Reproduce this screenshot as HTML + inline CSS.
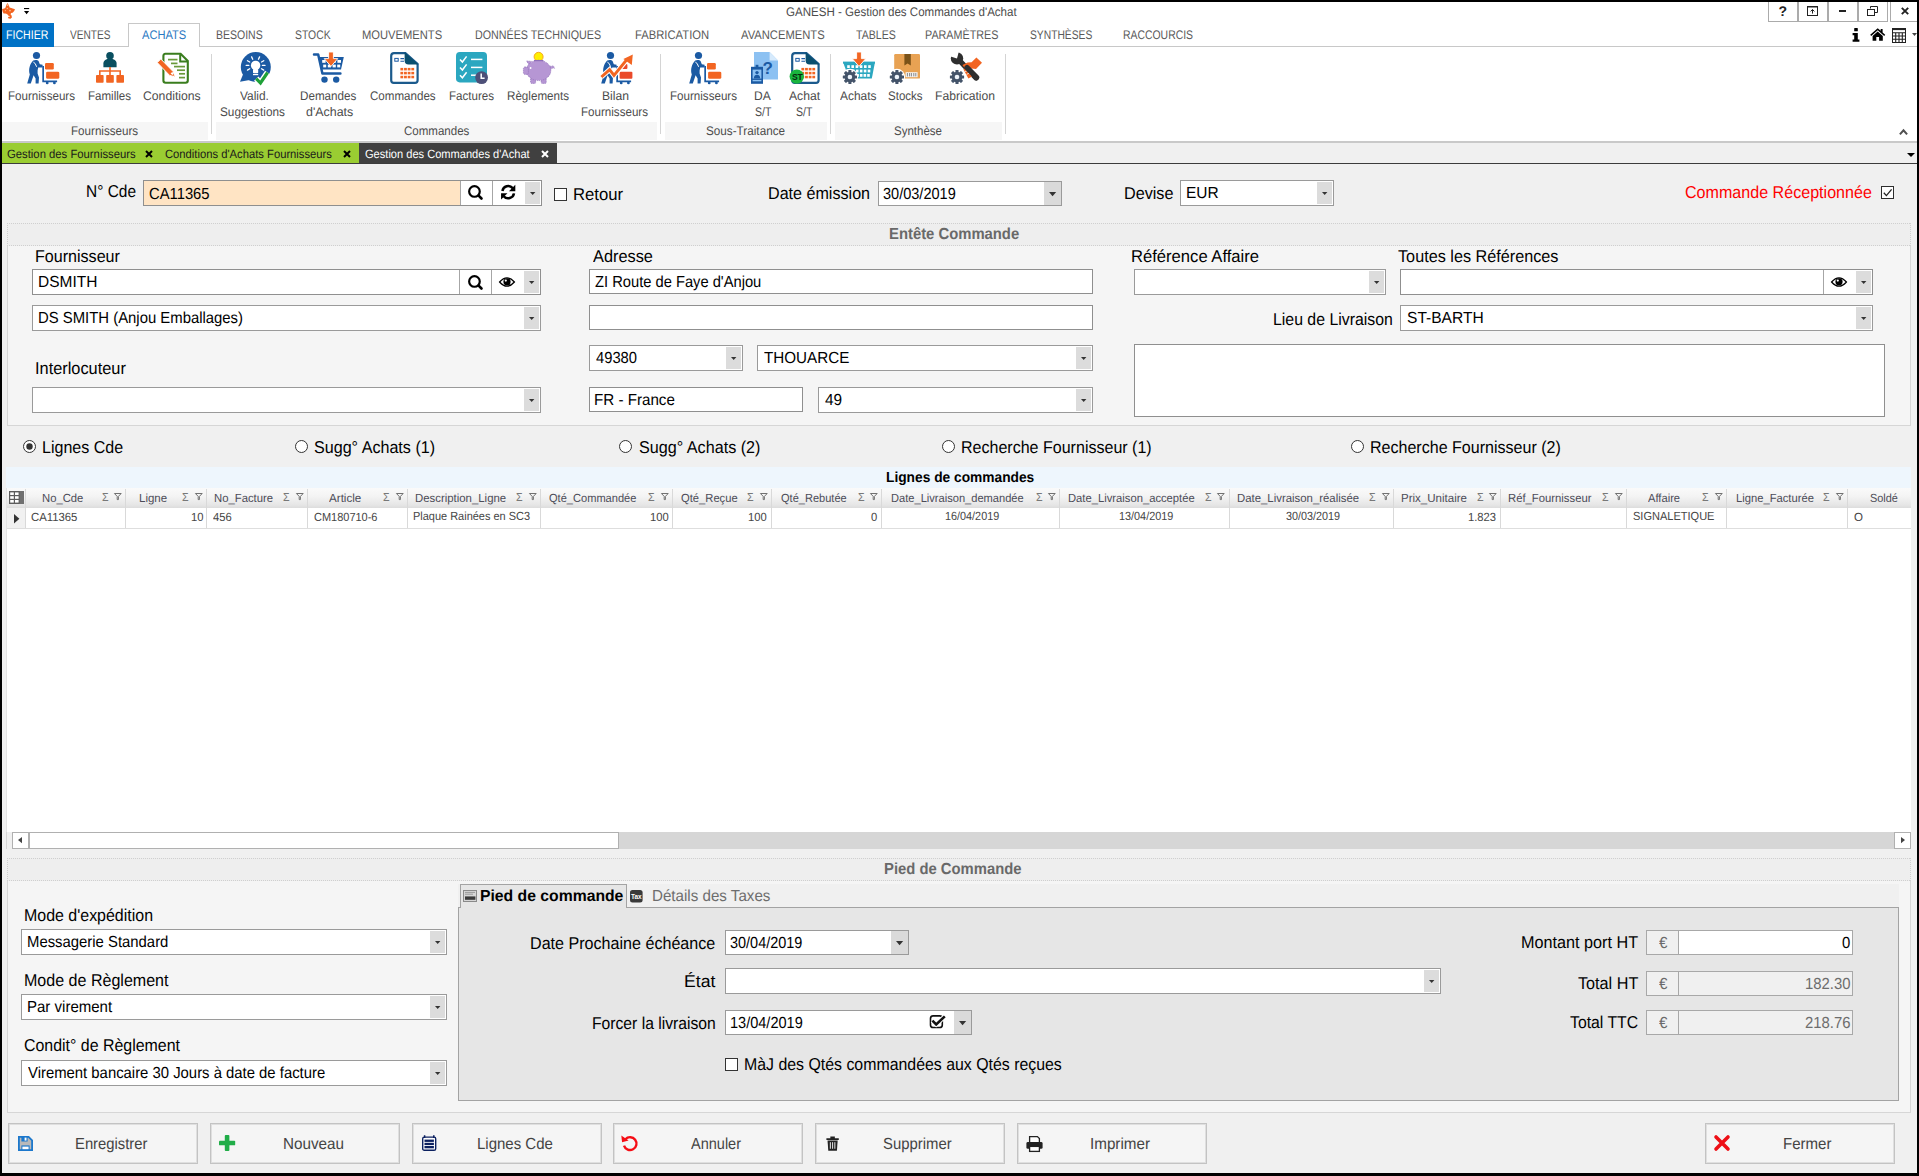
<!DOCTYPE html>
<html lang="fr"><head><meta charset="utf-8"><title>GANESH - Gestion des Commandes d'Achat</title>
<style>
html,body{margin:0;padding:0}
body{width:1919px;height:1176px;background:#000;overflow:hidden;position:relative;font-family:"Liberation Sans",sans-serif}
body>div,body>span,body>svg{position:absolute;box-sizing:border-box}
.t{white-space:nowrap;display:block;transform-origin:0 50%;text-rendering:geometricPrecision}
svg{overflow:visible}
</style></head>
<body>
<div style="left:2px;top:2px;width:1915px;height:1171px;background:#f0f0f0;"></div>
<div style="left:2px;top:2px;width:1915px;height:139px;background:#ffffff;"></div>
<div style="left:2px;top:141px;width:1915px;height:2px;background:#c9c9c9;"></div>
<span class="t" style="left:786.42px;top:4px;font-size:12.5px;line-height:16px;color:#4c4c4c;transform:scaleX(0.9237);">GANESH - Gestion des Commandes d'Achat</span>
<svg style="left:2px;top:3px" width="14" height="17" viewBox="0 0 14 17"><path d="M5.5 0.1 L6.9 2.6 L7.6 4.4 L9.2 4.9 L13 6.2 L12.2 8 L10.6 9.8 L9 10 L8.6 11.4 L9.6 12.6 L9.9 14.6 L8.6 15.8 L6.6 15.6 L5.9 14.4 L7.2 13.6 L6.4 12.4 L5 11 L3.4 10.4 L1.6 10.6 L0.6 8.6 L0.1 6 L2.4 5.4 L3.6 4.4 L4.1 2.6 Z" fill="#f2631f"/><g fill="#fbb98a"><circle cx="5.5" cy="2.2" r="0.9"/><circle cx="5.3" cy="5.4" r="0.7"/><circle cx="8" cy="7.6" r="0.9"/><circle cx="3.4" cy="7.6" r="0.6"/><circle cx="7.4" cy="13.4" r="0.6"/></g></svg>
<svg style="left:24px;top:8px" width="5.2" height="6.4" viewBox="0 0 5.2 6.4"><rect x="0" y="0" width="5.2" height="1.1" fill="#000"/><path d="M0 3 H5.2 L2.6 6.3 Z" fill="#000"/></svg>
<div style="left:1768px;top:2px;width:30px;height:20px;border:1px solid #ababab;border-top:none;"></div>
<div style="left:1798px;top:2px;width:30px;height:20px;border:1px solid #ababab;border-top:none;"></div>
<div style="left:1828px;top:2px;width:30px;height:20px;border:1px solid #ababab;border-top:none;"></div>
<div style="left:1858px;top:2px;width:30px;height:20px;border:1px solid #ababab;border-top:none;"></div>
<div style="left:1890px;top:2px;width:27px;height:20px;border:1px solid #ababab;border-top:none;border-right:none;"></div>
<span class="t" style="left:1778.39px;top:2px;font-size:14px;line-height:18px;color:#222;font-weight:bold;">?</span>
<svg style="left:1807px;top:6px" width="11" height="10" viewBox="0 0 11 10"><rect x="0.5" y="0.5" width="10" height="9" fill="none" stroke="#222" stroke-width="1"/><rect x="0.5" y="0.2" width="10" height="1.3" fill="#222"/><path d="M5.5 7.6 V3.6 M3.6 5.4 L5.5 3.5 L7.4 5.4" fill="none" stroke="#222" stroke-width="1"/></svg>
<div style="left:1839px;top:10px;width:7px;height:2px;background:#222;"></div>
<svg style="left:1867px;top:6px" width="11" height="10" viewBox="0 0 11 10"><path d="M3.5 2.5 V0.5 H10.5 V6.5 H8" fill="none" stroke="#222" stroke-width="1"/><rect x="0.5" y="3.5" width="7" height="6" fill="none" stroke="#222" stroke-width="1"/></svg>
<svg style="left:1900.5px;top:7px" width="8" height="8" viewBox="0 0 8 8"><path d="M0.8 0.8 L7.2 7.2 M7.2 0.8 L0.8 7.2" stroke="#222" stroke-width="1.9" fill="none"/></svg>
<svg style="left:1851.5px;top:28px" width="8" height="14" viewBox="0 0 8 14"><rect x="2.2" y="0" width="3.6" height="3.3" rx="0.6" fill="#000"/><path d="M0.6 5 H5.8 V11.4 H7.4 V13.8 H0.6 V11.4 H2.2 V7.3 H0.6 Z" fill="#000"/></svg>
<svg style="left:1869.5px;top:28px" width="16" height="13" viewBox="0 0 16 13"><path d="M7.7 0.2 L0.2 6.8 L1.2 7.9 L7.7 2.2 L14.2 7.9 L15.2 6.8 L12.6 4.5 V0.9 H10.7 V2.8 Z" fill="#000"/><path d="M7.7 3.4 L2.6 7.9 V12.8 H6.3 V9 H9.1 V12.8 H12.8 V7.9 Z" fill="#000"/></svg>
<svg style="left:1892px;top:28px" width="14" height="15" viewBox="0 0 14 15"><rect x="0.5" y="0.5" width="13" height="14" fill="#fff" stroke="#222" stroke-width="1"/><rect x="0.5" y="0.5" width="13" height="1.6" fill="#222"/><path d="M0.5 4.8 H13.5 M0.5 8 H13.5 M0.5 11.2 H13.5 M3.7 4.8 V14.5 M7 4.8 V14.5 M10.3 4.8 V14.5" stroke="#222" stroke-width="1.1" fill="none"/></svg>
<svg style="left:1912px;top:33px" width="5" height="3" viewBox="0 0 5 3"><path d="M0 0 H5 L2.5 3 Z" fill="#444"/></svg>
<div style="left:2px;top:46px;width:1915px;height:1px;background:#c8c8c8;"></div>
<div style="left:2px;top:23px;width:52px;height:24px;background:#0072c6;"></div>
<span class="t" style="left:6.45px;top:27px;font-size:12.5px;line-height:16px;color:#fff;transform:scaleX(0.8465);">FICHIER</span>
<div style="left:128px;top:23px;width:72px;height:24px;background:#fff;border:1px solid #c8c8c8;border-bottom:none;"></div>
<span class="t" style="left:69.95px;top:27px;font-size:12.5px;line-height:16px;color:#5a5a5a;transform:scaleX(0.8101);">VENTES</span>
<span class="t" style="left:142.24px;top:27px;font-size:12.5px;line-height:16px;color:#2a78c2;transform:scaleX(0.8895);">ACHATS</span>
<span class="t" style="left:216.46px;top:27px;font-size:12.5px;line-height:16px;color:#5a5a5a;transform:scaleX(0.8407);">BESOINS</span>
<span class="t" style="left:294.53px;top:27px;font-size:12.5px;line-height:16px;color:#5a5a5a;transform:scaleX(0.8307);">STOCK</span>
<span class="t" style="left:362.41px;top:27px;font-size:12.5px;line-height:16px;color:#5a5a5a;transform:scaleX(0.8943);">MOUVEMENTS</span>
<span class="t" style="left:475.14px;top:27px;font-size:12.5px;line-height:16px;color:#5a5a5a;transform:scaleX(0.8574);">DONNÉES TECHNIQUES</span>
<span class="t" style="left:635.1px;top:27px;font-size:12.5px;line-height:16px;color:#5a5a5a;transform:scaleX(0.8995);">FABRICATION</span>
<span class="t" style="left:740.94px;top:27px;font-size:12.5px;line-height:16px;color:#5a5a5a;transform:scaleX(0.8960);">AVANCEMENTS</span>
<span class="t" style="left:855.74px;top:27px;font-size:12.5px;line-height:16px;color:#5a5a5a;transform:scaleX(0.8455);">TABLES</span>
<span class="t" style="left:925.14px;top:27px;font-size:12.5px;line-height:16px;color:#5a5a5a;transform:scaleX(0.8610);">PARAMÈTRES</span>
<span class="t" style="left:1030.24px;top:27px;font-size:12.5px;line-height:16px;color:#5a5a5a;transform:scaleX(0.8221);">SYNTHÈSES</span>
<span class="t" style="left:1123.17px;top:27px;font-size:12.5px;line-height:16px;color:#5a5a5a;transform:scaleX(0.8332);">RACCOURCIS</span>
<div style="left:2px;top:122px;width:206px;height:18px;background:#f6f6f6;"></div>
<span class="t" style="left:71.37px;top:123px;font-size:12.5px;line-height:16px;color:#4c4c4c;transform:scaleX(0.9292);">Fournisseurs</span>
<div style="left:216px;top:122px;width:441px;height:18px;background:#f6f6f6;"></div>
<span class="t" style="left:403.72px;top:123px;font-size:12.5px;line-height:16px;color:#4c4c4c;transform:scaleX(0.9223);">Commandes</span>
<div style="left:665px;top:122px;width:162px;height:18px;background:#f6f6f6;"></div>
<span class="t" style="left:706.47px;top:123px;font-size:12.5px;line-height:16px;color:#4c4c4c;transform:scaleX(0.9377);">Sous-Traitance</span>
<div style="left:835px;top:122px;width:167px;height:18px;background:#f6f6f6;"></div>
<span class="t" style="left:894.48px;top:123px;font-size:12.5px;line-height:16px;color:#4c4c4c;transform:scaleX(0.9215);">Synthèse</span>
<div style="left:211px;top:54px;width:1px;height:80px;background:#d4d4d4;"></div>
<div style="left:660px;top:54px;width:1px;height:80px;background:#d4d4d4;"></div>
<div style="left:830px;top:54px;width:1px;height:80px;background:#d4d4d4;"></div>
<div style="left:1005px;top:54px;width:1px;height:80px;background:#d4d4d4;"></div>
<svg style="left:1899px;top:128px" width="9" height="8" viewBox="0 0 9 8"><path d="M0.9 6.4 L4.5 2.3 L8.1 6.4" stroke="#505050" stroke-width="2" fill="none"/></svg>
<span class="t" style="left:8.37px;top:88px;font-size:12.5px;line-height:16px;color:#4c4c4c;transform:scaleX(0.9278);">Fournisseurs</span>
<span class="t" style="left:88.38px;top:88px;font-size:12.5px;line-height:16px;color:#4c4c4c;transform:scaleX(0.9239);">Familles</span>
<span class="t" style="left:143.39px;top:88px;font-size:12.5px;line-height:16px;color:#4c4c4c;transform:scaleX(0.9774);">Conditions</span>
<span class="t" style="left:239.94px;top:88px;font-size:12.5px;line-height:16px;color:#4c4c4c;transform:scaleX(0.9510);">Valid.</span>
<span class="t" style="left:220.47px;top:104px;font-size:12.5px;line-height:16px;color:#4c4c4c;transform:scaleX(0.9436);">Suggestions</span>
<span class="t" style="left:300.07px;top:88px;font-size:12.5px;line-height:16px;color:#4c4c4c;transform:scaleX(0.9322);">Demandes</span>
<span class="t" style="left:305.5px;top:104px;font-size:12.5px;line-height:16px;color:#4c4c4c;transform:scaleX(0.9928);">d'Achats</span>
<span class="t" style="left:370.42px;top:88px;font-size:12.5px;line-height:16px;color:#4c4c4c;transform:scaleX(0.9266);">Commandes</span>
<span class="t" style="left:449.07px;top:88px;font-size:12.5px;line-height:16px;color:#4c4c4c;transform:scaleX(0.9259);">Factures</span>
<span class="t" style="left:507.07px;top:88px;font-size:12.5px;line-height:16px;color:#4c4c4c;transform:scaleX(0.9302);">Règlements</span>
<span class="t" style="left:601.73px;top:88px;font-size:12.5px;line-height:16px;color:#4c4c4c;transform:scaleX(0.9731);">Bilan</span>
<span class="t" style="left:581.37px;top:104px;font-size:12.5px;line-height:16px;color:#4c4c4c;transform:scaleX(0.9278);">Fournisseurs</span>
<span class="t" style="left:670.07px;top:88px;font-size:12.5px;line-height:16px;color:#4c4c4c;transform:scaleX(0.9278);">Fournisseurs</span>
<span class="t" style="left:754.04px;top:88px;font-size:12.5px;line-height:16px;color:#4c4c4c;transform:scaleX(0.9619);">DA</span>
<span class="t" style="left:754.83px;top:104px;font-size:12.5px;line-height:16px;color:#4c4c4c;transform:scaleX(0.8427);">S/T</span>
<span class="t" style="left:788.94px;top:88px;font-size:12.5px;line-height:16px;color:#4c4c4c;transform:scaleX(0.9743);">Achat</span>
<span class="t" style="left:796.03px;top:104px;font-size:12.5px;line-height:16px;color:#4c4c4c;transform:scaleX(0.8427);">S/T</span>
<span class="t" style="left:839.94px;top:88px;font-size:12.5px;line-height:16px;color:#4c4c4c;transform:scaleX(0.9551);">Achats</span>
<span class="t" style="left:888.48px;top:88px;font-size:12.5px;line-height:16px;color:#4c4c4c;transform:scaleX(0.9232);">Stocks</span>
<span class="t" style="left:935.03px;top:88px;font-size:12.5px;line-height:16px;color:#4c4c4c;transform:scaleX(0.9716);">Fabrication</span>
<svg style="left:27px;top:52px" width="33" height="32" viewBox="0 0 33 32"><g fill="#1b5aa3"><circle cx="9.5" cy="3.5" r="3.6"/><path d="M6.2 8.6 C8 7.6 10.8 7.8 11.8 9.4 L12.8 12.2 L15.6 12.8 V15.6 L11.2 15.4 C10.6 17.5 10.4 19.5 10.6 21.4 L12 25.4 L11.6 31.4 H8.6 V26.4 L6.6 23.2 L3.8 31.4 H0.2 L2.8 22.4 C1.2 18.4 2.6 12 6.2 8.6 Z"/><path d="M15.3 14 H17 V28.4 H30.1 V30.3 H15.3 Z"/><circle cx="20.2" cy="30.9" r="1.4"/><circle cx="27.4" cy="30.9" r="1.4"/></g><path d="M6.4 10.2 Q8.4 10.6 9.6 14.8" stroke="#fff" stroke-width="1" fill="none"/><rect x="18" y="11" width="8.8" height="6.5" rx="1.2" fill="#f26522"/><rect x="19.1" y="19.7" width="13.2" height="7.1" rx="1.4" fill="#f26522"/></svg>
<svg style="left:96px;top:52px" width="28" height="32" viewBox="0 0 28 32"><circle cx="14" cy="3.8" r="3.8" fill="#0a4f60"/><path d="M7.4 15.2 V11.6 C7.4 8.4 10 6.8 14 6.8 C18 6.8 20.6 8.4 20.6 11.6 V15.2 Z" fill="#0a4f60"/><path d="M14 15 V23.4 M3.8 23.4 V19 H24.2 V23.4" stroke="#f26522" stroke-width="1.6" fill="none"/><rect x="0" y="23" width="7.6" height="7.8" rx="0.8" fill="#f26522"/><rect x="10.2" y="23" width="7.6" height="7.8" rx="0.8" fill="#f26522"/><rect x="20.4" y="23" width="7.6" height="7.8" rx="0.8" fill="#f26522"/></svg>
<svg style="left:157px;top:52px" width="32" height="32" viewBox="0 0 32 32"><path d="M8.4 1.8 H23.6 L30.8 9 V28.6 Q30.8 30.8 28.6 30.8 H8.6 Q6.4 30.8 6.4 28.6 V4 Q6.4 1.8 8.4 1.8 Z" fill="#fff" stroke="#3a7d1e" stroke-width="2.1"/><path d="M23.2 2.2 V9.4 H30.4" fill="none" stroke="#3a7d1e" stroke-width="2"/><path d="M11 7.6 H20.5" stroke="#6a9a3a" stroke-width="1.7"/><path d="M14 11.4 H20.5" stroke="#6a9a3a" stroke-width="1.7"/><path d="M17 14.6 H28" stroke="#6a9a3a" stroke-width="1.7"/><path d="M20 18.2 H28" stroke="#6a9a3a" stroke-width="1.7"/><path d="M22 21.8 H28" stroke="#6a9a3a" stroke-width="1.7"/><path d="M22 25.6 H28" stroke="#6a9a3a" stroke-width="1.7"/><path d="M0.2 10.6 L3.8 7 L16.4 19.8 L17.6 24.8 L12.6 23.4 Z" fill="#f26522" stroke="#fff" stroke-width="1"/><path d="M13.6 21.4 L15.4 19.8 L17.6 24.8 Z" fill="#fff"/><path d="M15.6 22.8 L17.6 24.8 L16.6 22 Z" fill="#f26522"/></svg>
<svg style="left:240px;top:52px" width="32" height="32" viewBox="0 0 32 32"><circle cx="15.8" cy="15" r="15" fill="#1b5aa3"/><path d="M0 29.8 L4 20 L11 27.8 Z" fill="#1b5aa3"/><circle cx="15.6" cy="13.4" r="4.7" fill="#fff"/><rect x="13" y="17" width="5.2" height="4.2" rx="0.8" fill="#fff"/><path d="M13 22.6 H18.2" stroke="#fff" stroke-width="1.2"/><path d="M9.71 10 L7.46 8.7" stroke="#fff" stroke-width="1.3" stroke-linecap="round"/><path d="M12.73 7.24 L11.63 4.88" stroke="#fff" stroke-width="1.3" stroke-linecap="round"/><path d="M18.47 7.24 L19.57 4.88" stroke="#fff" stroke-width="1.3" stroke-linecap="round"/><path d="M21.49 10 L23.74 8.7" stroke="#fff" stroke-width="1.3" stroke-linecap="round"/><path d="M8.8 13.4 L6.2 13.4" stroke="#fff" stroke-width="1.3" stroke-linecap="round"/><path d="M22.4 13.4 L25 13.4" stroke="#fff" stroke-width="1.3" stroke-linecap="round"/><path d="M9.71 16.8 L7.46 18.1" stroke="#fff" stroke-width="1.3" stroke-linecap="round"/><path d="M21.49 16.8 L23.74 18.1" stroke="#fff" stroke-width="1.3" stroke-linecap="round"/><path d="M16.2 26.6 L20.5 31 L27.6 20.5" stroke="#fff" stroke-width="6" fill="none"/><path d="M16.2 26.6 L20.5 31 L27.6 20.5" stroke="#1ea038" stroke-width="3.2" fill="none"/></svg>
<svg style="left:313px;top:52px" width="32" height="32" viewBox="0 0 32 32"><path d="M1 2.6 H5.2 L9.4 21.4 H27.4" stroke="#1b5aa3" stroke-width="2.5" fill="none" stroke-linecap="round" stroke-linejoin="round"/><path d="M6 5 H30.8 L28 17.4 H8.8 Z" fill="#1b5aa3"/><rect x="9.2" y="8" width="3.4" height="2.8" fill="#fff"/><rect x="14.2" y="8" width="3.4" height="2.8" fill="#fff"/><rect x="19.4" y="8" width="3.4" height="2.8" fill="#fff"/><rect x="24.4" y="8" width="3.6" height="2.8" fill="#fff"/><rect x="10.2" y="12.6" width="3" height="2.8" fill="#fff"/><rect x="14.8" y="12.6" width="3.2" height="2.8" fill="#fff"/><rect x="19.6" y="12.6" width="3.2" height="2.8" fill="#fff"/><rect x="24.2" y="12.6" width="3" height="2.8" fill="#fff"/><circle cx="11.5" cy="27.6" r="3.2" fill="#1b5aa3"/><circle cx="23.2" cy="27.6" r="3.2" fill="#1b5aa3"/><path d="M15.6 0 H20.4 V6.6 H24.8 L18 14.4 L11.2 6.6 H15.6 Z" fill="#f26522" stroke="#fff" stroke-width="0.9"/></svg>
<svg style="left:389.5px;top:52px" width="29" height="32" viewBox="0 0 29 32"><path d="M4 1.2 H15.4 L27.6 12 V28.2 Q27.6 30.8 25 30.8 H3.8 Q1.2 30.8 1.2 28.2 V4 Q1.2 1.2 4 1.2 Z" fill="#fff" stroke="#1b5a8c" stroke-width="2.2"/><path d="M14.6 0.2 L28.6 12.6 H18.6 Q14.6 12.6 14.6 8.6 Z" fill="#0a4f6e"/><rect x="4.8" y="6.4" width="3.4" height="2.8" fill="none" stroke="#1b5aa3" stroke-width="1"/><path d="M10.4 6.6 H14 M10.4 9.2 H14" stroke="#1b5aa3" stroke-width="1.1"/><rect x="10.4" y="15.9" width="2.8" height="2.5" fill="#f26522"/><rect x="10.4" y="19.85" width="2.8" height="2.5" fill="#f26522"/><rect x="10.4" y="23.8" width="2.8" height="2.5" fill="#f26522"/><rect x="14.05" y="15.9" width="2.8" height="2.5" fill="#f26522"/><rect x="14.05" y="19.85" width="2.8" height="2.5" fill="#f26522"/><rect x="14.05" y="23.8" width="2.8" height="2.5" fill="#f26522"/><rect x="17.7" y="15.9" width="2.8" height="2.5" fill="#f26522"/><rect x="17.7" y="19.85" width="2.8" height="2.5" fill="#f26522"/><rect x="17.7" y="23.8" width="2.8" height="2.5" fill="#f26522"/><rect x="21.35" y="15.9" width="2.8" height="2.5" fill="#f26522"/><rect x="21.35" y="19.85" width="2.8" height="2.5" fill="#f26522"/><rect x="21.35" y="23.8" width="2.8" height="2.5" fill="#f26522"/></svg>
<svg style="left:456px;top:52px" width="32" height="32" viewBox="0 0 32 32"><rect x="0" y="0" width="31" height="30.4" rx="3.8" fill="#2ba7c0"/><path d="M4 7.4 L6.4 10 L10.6 4.4" stroke="#fff" stroke-width="1.5" fill="none"/><path d="M15 7.4 H26.4" stroke="#fff" stroke-width="1.5"/><path d="M4 15.4 L6.4 18 L10.6 12.4" stroke="#fff" stroke-width="1.5" fill="none"/><path d="M15 15.4 H26.4" stroke="#fff" stroke-width="1.5"/><path d="M4 23.2 L6.4 25.8 L10.6 20.2" stroke="#fff" stroke-width="1.5" fill="none"/><path d="M15 23.2 H26.4" stroke="#fff" stroke-width="1.5"/><circle cx="25.6" cy="25.6" r="6.4" fill="#4d5078"/><path d="M25.2 21.6 V26.2 H28.6" stroke="#fff" stroke-width="1.5" fill="none"/></svg>
<svg style="left:522.5px;top:52px" width="32" height="32" viewBox="0 0 32 32"><circle cx="15.6" cy="4.8" r="4.5" fill="#ffef00" stroke="#f5a623" stroke-width="1"/><g fill="#b696d4" stroke="#8f6fb8" stroke-width="0.7" stroke-dasharray="1.2 0.8"><rect x="7.6" y="24" width="5" height="7.4" rx="1"/><rect x="18.2" y="24" width="5" height="7.4" rx="1"/><path d="M26.6 14.6 Q31 12.6 31.6 16.2 Q29.4 15.6 27.6 17.4 Z"/><path d="M3.6 9 L8.4 9.4 L6.4 13.4 Z"/><ellipse cx="15.6" cy="18.4" rx="12.2" ry="10.2"/><rect x="0.4" y="15" width="5" height="7.4" rx="1.6"/></g><path d="M11 8.6 H20.4" stroke="#8f6fb8" stroke-width="1.2"/><circle cx="7.6" cy="16" r="0.9" fill="#fff"/></svg>
<svg style="left:601px;top:52px" width="32" height="32" viewBox="0 0 32 32"><g fill="#1b5aa3"><circle cx="9.5" cy="3.5" r="3.6"/><path d="M6.2 8.6 C8 7.6 10.8 7.8 11.8 9.4 L12.8 12.2 L15.6 12.8 V15.6 L11.2 15.4 C10.6 17.5 10.4 19.5 10.6 21.4 L12 25.4 L11.6 31.4 H8.6 V26.4 L6.6 23.2 L3.8 31.4 H0.2 L2.8 22.4 C1.2 18.4 2.6 12 6.2 8.6 Z"/><path d="M15.3 14 H17 V28.4 H30.1 V30.3 H15.3 Z"/><circle cx="20.2" cy="30.9" r="1.4"/><circle cx="27.4" cy="30.9" r="1.4"/></g><path d="M6.4 10.2 Q8.4 10.6 9.6 14.8" stroke="#fff" stroke-width="1" fill="none"/><rect x="18.6" y="19.8" width="12.8" height="7" rx="1" fill="#ea4a2a"/><rect x="20.4" y="12" width="6" height="5" rx="1" fill="#ea4a2a"/><path d="M0.4 25 L8.6 17.6 L13 23.4 L26 7.4" stroke="#fff" stroke-width="5" fill="none"/><path d="M0.4 25 L8.6 17.6 L13 23.4 L26 7.4" stroke="#f26522" stroke-width="3" fill="none"/><path d="M22.4 7 L31.8 2.6 L30.8 13 Z" fill="#f26522"/></svg>
<svg style="left:688.7px;top:52px" width="33" height="32" viewBox="0 0 33 32"><g fill="#1b5aa3"><circle cx="9.5" cy="3.5" r="3.6"/><path d="M6.2 8.6 C8 7.6 10.8 7.8 11.8 9.4 L12.8 12.2 L15.6 12.8 V15.6 L11.2 15.4 C10.6 17.5 10.4 19.5 10.6 21.4 L12 25.4 L11.6 31.4 H8.6 V26.4 L6.6 23.2 L3.8 31.4 H0.2 L2.8 22.4 C1.2 18.4 2.6 12 6.2 8.6 Z"/><path d="M15.3 14 H17 V28.4 H30.1 V30.3 H15.3 Z"/><circle cx="20.2" cy="30.9" r="1.4"/><circle cx="27.4" cy="30.9" r="1.4"/></g><path d="M6.4 10.2 Q8.4 10.6 9.6 14.8" stroke="#fff" stroke-width="1" fill="none"/><rect x="18" y="11" width="8.8" height="6.5" rx="1.2" fill="#f26522"/><rect x="19.1" y="19.7" width="13.2" height="7.1" rx="1.4" fill="#f26522"/></svg>
<svg style="left:751px;top:52px" width="28" height="32" viewBox="0 0 28 32"><path d="M3 0 H18.6 L27 8.6 V27.4 H3 Z" fill="#8cc1f2"/><path d="M18.6 0 L27 8.6 H18.6 Z" fill="#d6eafc"/><text x="11.6" y="21.6" font-family="Liberation Sans,sans-serif" font-size="17" font-weight="bold" fill="#1b5aa3">?</text><rect x="0" y="14.8" width="12" height="17" fill="#1b5aa3"/><rect x="4.6" y="12.8" width="2.8" height="3.6" fill="#1b5aa3"/><rect x="1.6" y="17.6" width="8.8" height="9" fill="#8cc1f2"/><circle cx="6" cy="20.6" r="1.7" fill="#1b5aa3"/><path d="M2.8 26.6 Q2.8 22.8 6 22.8 Q9.2 22.8 9.2 26.6 Z" fill="#1b5aa3"/><path d="M1.6 28.6 H10.4" stroke="#8cc1f2" stroke-width="1.4"/></svg>
<svg style="left:790.5px;top:52px" width="29" height="32" viewBox="0 0 29 32"><path d="M4 1.2 H15.4 L27.6 12 V28.2 Q27.6 30.8 25 30.8 H3.8 Q1.2 30.8 1.2 28.2 V4 Q1.2 1.2 4 1.2 Z" fill="#fff" stroke="#1b5a8c" stroke-width="2.2"/><path d="M14.6 0.2 L28.6 12.6 H18.6 Q14.6 12.6 14.6 8.6 Z" fill="#0a4f6e"/><rect x="4.8" y="6.4" width="3.4" height="2.8" fill="none" stroke="#1b5aa3" stroke-width="1"/><path d="M10.4 6.6 H14 M10.4 9.2 H14" stroke="#1b5aa3" stroke-width="1.1"/><rect x="10.4" y="15.9" width="2.8" height="2.5" fill="#f26522"/><rect x="10.4" y="19.85" width="2.8" height="2.5" fill="#f26522"/><rect x="10.4" y="23.8" width="2.8" height="2.5" fill="#f26522"/><rect x="14.05" y="15.9" width="2.8" height="2.5" fill="#f26522"/><rect x="14.05" y="19.85" width="2.8" height="2.5" fill="#f26522"/><rect x="14.05" y="23.8" width="2.8" height="2.5" fill="#f26522"/><rect x="17.7" y="15.9" width="2.8" height="2.5" fill="#f26522"/><rect x="17.7" y="19.85" width="2.8" height="2.5" fill="#f26522"/><rect x="17.7" y="23.8" width="2.8" height="2.5" fill="#f26522"/><rect x="21.35" y="15.9" width="2.8" height="2.5" fill="#f26522"/><rect x="21.35" y="19.85" width="2.8" height="2.5" fill="#f26522"/><rect x="21.35" y="23.8" width="2.8" height="2.5" fill="#f26522"/><circle cx="5.8" cy="24.6" r="7.2" fill="#19b53e"/><text x="0.9" y="27.6" font-family="Liberation Sans,sans-serif" font-size="8.6" font-weight="bold" fill="#06280e">ST</text></svg>
<svg style="left:843px;top:52px" width="32" height="32" viewBox="0 0 32 32"><path d="M0 10 H32 L28.8 26.6 H6 Z" fill="#2ba7c0"/><rect x="0" y="9.6" width="32" height="2" fill="#2ba7c0"/><rect x="4.2" y="13.2" width="2.6" height="2.8" fill="#fff"/><rect x="8.4" y="13.2" width="2.6" height="2.8" fill="#fff"/><rect x="12.6" y="13.2" width="2.6" height="2.8" fill="#fff"/><rect x="16.8" y="13.2" width="2.6" height="2.8" fill="#fff"/><rect x="21" y="13.2" width="2.6" height="2.8" fill="#fff"/><rect x="25.2" y="13.2" width="2.6" height="2.8" fill="#fff"/><rect x="5.1" y="17.6" width="2.6" height="2.8" fill="#fff"/><rect x="9.02" y="17.6" width="2.6" height="2.8" fill="#fff"/><rect x="12.94" y="17.6" width="2.6" height="2.8" fill="#fff"/><rect x="16.86" y="17.6" width="2.6" height="2.8" fill="#fff"/><rect x="20.78" y="17.6" width="2.6" height="2.8" fill="#fff"/><rect x="24.7" y="17.6" width="2.6" height="2.8" fill="#fff"/><rect x="6" y="22" width="2.6" height="2.8" fill="#fff"/><rect x="9.64" y="22" width="2.6" height="2.8" fill="#fff"/><rect x="13.28" y="22" width="2.6" height="2.8" fill="#fff"/><rect x="16.92" y="22" width="2.6" height="2.8" fill="#fff"/><rect x="20.56" y="22" width="2.6" height="2.8" fill="#fff"/><rect x="24.2" y="22" width="2.6" height="2.8" fill="#fff"/><path d="M13.6 0 H18.4 V6.6 H22.8 L16 14.4 L9.2 6.6 H13.6 Z" fill="#f26522" stroke="#fff" stroke-width="0.9"/><g transform="translate(6.9 25)" fill="#44546a"><circle r="8.2" fill="#fff"/><circle r="5.3"/><rect x="-1.55" y="-7.1" width="3.1" height="3.4" rx="0.5" transform="rotate(0)"/><rect x="-1.55" y="-7.1" width="3.1" height="3.4" rx="0.5" transform="rotate(45)"/><rect x="-1.55" y="-7.1" width="3.1" height="3.4" rx="0.5" transform="rotate(90)"/><rect x="-1.55" y="-7.1" width="3.1" height="3.4" rx="0.5" transform="rotate(135)"/><rect x="-1.55" y="-7.1" width="3.1" height="3.4" rx="0.5" transform="rotate(180)"/><rect x="-1.55" y="-7.1" width="3.1" height="3.4" rx="0.5" transform="rotate(225)"/><rect x="-1.55" y="-7.1" width="3.1" height="3.4" rx="0.5" transform="rotate(270)"/><rect x="-1.55" y="-7.1" width="3.1" height="3.4" rx="0.5" transform="rotate(315)"/><circle r="2.3" fill="#eef4fb"/></g></svg>
<svg style="left:890px;top:52px" width="32" height="32" viewBox="0 0 32 32"><rect x="4.2" y="2" width="25.8" height="24.6" rx="1.2" fill="#e8a253"/><path d="M14.4 2 H20.8 V13.4 L17.6 11.4 L14.4 13.4 Z" fill="#7a5218"/><rect x="15.6" y="20.2" width="12" height="5" fill="#f4f4f4"/><path d="M17.4 21 V24.4 M19.6 21 V24.4 M21.4 21 V24.4 M23.8 21 V24.4 M25.8 21 V24.4" stroke="#888" stroke-width="1"/><g transform="translate(6.9 25)" fill="#44546a"><circle r="8.2" fill="#fff"/><circle r="5.3"/><rect x="-1.55" y="-7.1" width="3.1" height="3.4" rx="0.5" transform="rotate(0)"/><rect x="-1.55" y="-7.1" width="3.1" height="3.4" rx="0.5" transform="rotate(45)"/><rect x="-1.55" y="-7.1" width="3.1" height="3.4" rx="0.5" transform="rotate(90)"/><rect x="-1.55" y="-7.1" width="3.1" height="3.4" rx="0.5" transform="rotate(135)"/><rect x="-1.55" y="-7.1" width="3.1" height="3.4" rx="0.5" transform="rotate(180)"/><rect x="-1.55" y="-7.1" width="3.1" height="3.4" rx="0.5" transform="rotate(225)"/><rect x="-1.55" y="-7.1" width="3.1" height="3.4" rx="0.5" transform="rotate(270)"/><rect x="-1.55" y="-7.1" width="3.1" height="3.4" rx="0.5" transform="rotate(315)"/><circle r="2.3" fill="#eef4fb"/></g></svg>
<svg style="left:950px;top:52px" width="32" height="32" viewBox="0 0 32 32"><path d="M9 8 L26 26" stroke="#2f2f2f" stroke-width="5.4" stroke-linecap="round"/><circle cx="7" cy="6.4" r="6.2" fill="#2f2f2f"/><path d="M7 6.4 L-1 4 L2 -2 L9 -1 Z" fill="#fff"/><path d="M12.4 13 L17.6 10.6 L21.6 10.2 L26.4 5.4 L32 10.8 L26 17 L21.6 16.4 L17 19.6 Z" fill="#f26522"/><path d="M13.4 17.2 L17.4 15.4 L22 24.4 L18.4 26.6 Z" fill="#f26522"/><path d="M15 19.6 L18.8 17.8 M16.6 22.4 L20.2 20.6" stroke="#fff" stroke-width="0.8"/><path d="M17 15.6 L26.6 25.4" stroke="#2f2f2f" stroke-width="5.4" stroke-linecap="round"/><g transform="translate(7 25)" fill="#44546a"><circle r="8.2" fill="#fff"/><circle r="5.3"/><rect x="-1.55" y="-7.1" width="3.1" height="3.4" rx="0.5" transform="rotate(0)"/><rect x="-1.55" y="-7.1" width="3.1" height="3.4" rx="0.5" transform="rotate(45)"/><rect x="-1.55" y="-7.1" width="3.1" height="3.4" rx="0.5" transform="rotate(90)"/><rect x="-1.55" y="-7.1" width="3.1" height="3.4" rx="0.5" transform="rotate(135)"/><rect x="-1.55" y="-7.1" width="3.1" height="3.4" rx="0.5" transform="rotate(180)"/><rect x="-1.55" y="-7.1" width="3.1" height="3.4" rx="0.5" transform="rotate(225)"/><rect x="-1.55" y="-7.1" width="3.1" height="3.4" rx="0.5" transform="rotate(270)"/><rect x="-1.55" y="-7.1" width="3.1" height="3.4" rx="0.5" transform="rotate(315)"/><circle r="2.3" fill="#eef4fb"/></g></svg>
<div style="left:2px;top:143px;width:357px;height:20px;background:#9acd32;"></div>
<div style="left:359px;top:143px;width:198.3px;height:20px;background:#404040;"></div>
<div style="left:2px;top:163px;width:1915px;height:1px;background:#3c3c3c;"></div>
<span class="t" style="left:6.74px;top:146px;font-size:12px;line-height:16px;color:#1a1a1a;transform:scaleX(0.9409);">Gestion des Fournisseurs</span>
<span class="t" style="left:165.44px;top:146px;font-size:12px;line-height:16px;color:#1a1a1a;transform:scaleX(0.9359);">Conditions d'Achats Fournisseurs</span>
<span class="t" style="left:365.45px;top:146px;font-size:12px;line-height:16px;color:#ffffff;transform:scaleX(0.9228);">Gestion des Commandes d'Achat</span>
<svg style="left:145.3px;top:150px" width="8" height="8" viewBox="0 0 8 8"><path d="M1 1 L7 7 M7 1 L1 7" stroke="#000" stroke-width="2" fill="none"/></svg>
<svg style="left:343.3px;top:150px" width="8" height="8" viewBox="0 0 8 8"><path d="M1 1 L7 7 M7 1 L1 7" stroke="#000" stroke-width="2" fill="none"/></svg>
<svg style="left:541px;top:150px" width="8" height="8" viewBox="0 0 8 8"><path d="M1 1 L7 7 M7 1 L1 7" stroke="#fff" stroke-width="2" fill="none"/></svg>
<svg style="left:1906.5px;top:153px" width="8" height="4" viewBox="0 0 8 4"><path d="M0 0 H8 L4 4 Z" fill="#000"/></svg>
<span class="t" style="left:86.26px;top:180px;font-size:17.2px;line-height:22px;color:#000;transform:scaleX(0.8998);">N° Cde</span>
<div style="left:143px;top:180px;width:399px;height:26px;background:#ffe4c4;border:1px solid #8f8f8f;"></div>
<div style="left:461px;top:181px;width:80px;height:24px;background:#fff;"></div>
<div style="left:460px;top:181px;width:1px;height:24px;background:#a6a6a6;"></div>
<div style="left:492px;top:181px;width:1px;height:24px;background:#a6a6a6;"></div>
<span class="t" style="left:148.66px;top:184px;font-size:16px;line-height:21px;color:#000;transform:scaleX(0.9239);">CA11365</span>
<svg style="left:468.1px;top:185.2px" width="15.2" height="15.2" viewBox="0 0 16 16"><circle cx="6.8" cy="6.8" r="5.6" fill="none" stroke="#000" stroke-width="2.3"/><path d="M11.2 11.2 L14.2 14.2" stroke="#000" stroke-width="2.8" stroke-linecap="round"/></svg>
<svg style="left:499.5px;top:184.4px" width="16.4" height="16.4" viewBox="0 0 15 15"><path d="M2.2 6.4 A5.4 5.4 0 0 1 11.6 3.8" fill="none" stroke="#000" stroke-width="2.3"/><path d="M12.8 8.6 A5.4 5.4 0 0 1 3.4 11.2" fill="none" stroke="#000" stroke-width="2.3"/><path d="M14 0.8 V6.6 H8.2 Z" fill="#000"/><path d="M1 14.2 V8.4 H6.8 Z" fill="#000"/></svg>
<div style="left:525px;top:182px;width:15px;height:22px;background:#dcdcdc;"></div>
<svg style="left:529.8px;top:191.9px" width="5.4" height="3" viewBox="0 0 5.4 3"><path d="M0 0 H5.4 L2.7 3 Z" fill="#333"/></svg>
<div style="left:554px;top:188px;width:13px;height:13px;background:#fff;border:1px solid #333;"></div>
<span class="t" style="left:573.06px;top:183px;font-size:17.2px;line-height:22px;color:#000;transform:scaleX(0.9713);">Retour</span>
<span class="t" style="left:768.21px;top:182px;font-size:17.2px;line-height:22px;color:#000;transform:scaleX(0.9371);">Date émission</span>
<div style="left:878px;top:181px;width:184px;height:25px;background:#fff;border:1px solid #9a9a9a;"></div>
<div style="left:1044px;top:182px;width:17px;height:23px;background:#dadada;"></div>
<svg style="left:1048.9px;top:191.9px" width="7.2" height="4.2" viewBox="0 0 7.2 4.2"><path d="M0 0 H7.2 L3.6 4.2 Z" fill="#333"/></svg>
<span class="t" style="left:882.92px;top:184px;font-size:16px;line-height:21px;color:#000;transform:scaleX(0.9083);">30/03/2019</span>
<span class="t" style="left:1124.11px;top:182px;font-size:17.2px;line-height:22px;color:#000;transform:scaleX(0.9411);">Devise</span>
<div style="left:1180px;top:180px;width:154px;height:26px;background:#fff;border:1px solid #9a9a9a;"></div>
<div style="left:1317px;top:182px;width:15px;height:22px;background:#dcdcdc;"></div>
<svg style="left:1321.8px;top:191.9px" width="5.4" height="3" viewBox="0 0 5.4 3"><path d="M0 0 H5.4 L2.7 3 Z" fill="#333"/></svg>
<span class="t" style="left:1186.26px;top:183px;font-size:16px;line-height:21px;color:#000;transform:scaleX(0.9667);">EUR</span>
<span class="t" style="left:1685.2px;top:181px;font-size:17.2px;line-height:22px;color:#ff0000;transform:scaleX(0.9359);">Commande Réceptionnée</span>
<div style="left:1881px;top:186px;width:13px;height:13px;background:#fff;border:1px solid #2e2e2e;"></div>
<svg style="left:1881px;top:186px" width="13" height="13" viewBox="0 0 13 13"><path d="M2.8 6.8 L5.4 9.6 L10.6 3.4" stroke="#222" stroke-width="1.3" fill="none"/></svg>
<div style="left:7px;top:223px;width:1904px;height:23px;background:#eeeeee;"></div>
<div style="left:7px;top:223px;width:1904px;height:1px;background-image:repeating-linear-gradient(90deg,#cfcfcf 0 1px,transparent 1px 2px);"></div>
<div style="left:7px;top:245px;width:1904px;height:1px;background-image:repeating-linear-gradient(90deg,#cfcfcf 0 1px,transparent 1px 2px);"></div>
<div style="left:1910px;top:223px;width:1px;height:23px;background-image:repeating-linear-gradient(180deg,#cfcfcf 0 1px,transparent 1px 2px);"></div>
<div style="left:7px;top:223px;width:1px;height:23px;background-image:repeating-linear-gradient(180deg,#cfcfcf 0 1px,transparent 1px 2px);"></div>
<span class="t" style="left:888.54px;top:224px;font-size:16px;line-height:21px;color:#696969;font-weight:bold;transform:scaleX(0.9267);">Entête Commande</span>
<div style="left:7px;top:246px;width:1904px;height:180px;background:#f5f5f5;border:1px solid #d6d6d6;border-top:none;"></div>
<span class="t" style="left:34.91px;top:245px;font-size:17.2px;line-height:22px;color:#000;transform:scaleX(0.9356);">Fournisseur</span>
<div style="left:32px;top:269px;width:509px;height:26px;background:#fff;border:1px solid #8f8f8f;"></div>
<div style="left:459px;top:270px;width:1px;height:24px;background:#a6a6a6;"></div>
<div style="left:491px;top:270px;width:1px;height:24px;background:#a6a6a6;"></div>
<span class="t" style="left:38.36px;top:272px;font-size:16px;line-height:21px;color:#000;transform:scaleX(0.9673);">DSMITH</span>
<svg style="left:467.5px;top:274.6px" width="15.2" height="15.2" viewBox="0 0 16 16"><circle cx="6.8" cy="6.8" r="5.6" fill="none" stroke="#000" stroke-width="2.3"/><path d="M11.2 11.2 L14.2 14.2" stroke="#000" stroke-width="2.8" stroke-linecap="round"/></svg>
<svg style="left:499px;top:277px" width="16" height="10" viewBox="0 0 16 10"><path d="M0.6 5 Q8 -3.4 15.4 5 Q8 13.4 0.6 5 Z" fill="#fff" stroke="#000" stroke-width="1.3"/><circle cx="8" cy="4.8" r="3.6" fill="#000"/><circle cx="6.8" cy="3.6" r="1.1" fill="#fff"/></svg>
<div style="left:524px;top:271px;width:15px;height:22px;background:#dcdcdc;"></div>
<svg style="left:528.8px;top:280.9px" width="5.4" height="3" viewBox="0 0 5.4 3"><path d="M0 0 H5.4 L2.7 3 Z" fill="#333"/></svg>
<div style="left:32px;top:305px;width:509px;height:26px;background:#fff;border:1px solid #9a9a9a;"></div>
<div style="left:524px;top:307px;width:15px;height:22px;background:#dcdcdc;"></div>
<svg style="left:528.8px;top:316.9px" width="5.4" height="3" viewBox="0 0 5.4 3"><path d="M0 0 H5.4 L2.7 3 Z" fill="#333"/></svg>
<span class="t" style="left:38.41px;top:308px;font-size:16px;line-height:21px;color:#000;transform:scaleX(0.9297);">DS SMITH (Anjou Emballages)</span>
<span class="t" style="left:35.23px;top:357px;font-size:17.2px;line-height:22px;color:#000;transform:scaleX(0.9511);">Interlocuteur</span>
<div style="left:32px;top:387px;width:509px;height:26px;background:#fff;border:1px solid #9a9a9a;"></div>
<div style="left:524px;top:389px;width:15px;height:22px;background:#dcdcdc;"></div>
<svg style="left:528.8px;top:398.9px" width="5.4" height="3" viewBox="0 0 5.4 3"><path d="M0 0 H5.4 L2.7 3 Z" fill="#333"/></svg>
<span class="t" style="left:592.62px;top:245px;font-size:17.2px;line-height:22px;color:#000;transform:scaleX(0.9495);">Adresse</span>
<div style="left:589px;top:269px;width:504px;height:25px;background:#fff;border:1px solid #8f8f8f;"></div>
<span class="t" style="left:594.66px;top:272px;font-size:16px;line-height:21px;color:#000;transform:scaleX(0.9190);">ZI Route de Faye d'Anjou</span>
<div style="left:589px;top:305px;width:504px;height:25px;background:#fff;border:1px solid #8f8f8f;"></div>
<div style="left:589px;top:345px;width:154px;height:26px;background:#fff;border:1px solid #9a9a9a;"></div>
<div style="left:726px;top:347px;width:15px;height:22px;background:#dcdcdc;"></div>
<svg style="left:730.8px;top:356.9px" width="5.4" height="3" viewBox="0 0 5.4 3"><path d="M0 0 H5.4 L2.7 3 Z" fill="#333"/></svg>
<span class="t" style="left:595.63px;top:348px;font-size:16px;line-height:21px;color:#000;transform:scaleX(0.9207);">49380</span>
<div style="left:757px;top:345px;width:336px;height:26px;background:#fff;border:1px solid #9a9a9a;"></div>
<div style="left:1076px;top:347px;width:15px;height:22px;background:#dcdcdc;"></div>
<svg style="left:1080.8px;top:356.9px" width="5.4" height="3" viewBox="0 0 5.4 3"><path d="M0 0 H5.4 L2.7 3 Z" fill="#333"/></svg>
<span class="t" style="left:763.62px;top:348px;font-size:16px;line-height:21px;color:#000;transform:scaleX(0.9502);">THOUARCE</span>
<div style="left:589px;top:387px;width:214px;height:25px;background:#fff;border:1px solid #8f8f8f;"></div>
<span class="t" style="left:593.79px;top:390px;font-size:16px;line-height:21px;color:#000;transform:scaleX(0.9477);">FR - France</span>
<div style="left:818px;top:387px;width:275px;height:26px;background:#fff;border:1px solid #9a9a9a;"></div>
<div style="left:1076px;top:389px;width:15px;height:22px;background:#dcdcdc;"></div>
<svg style="left:1080.8px;top:398.9px" width="5.4" height="3" viewBox="0 0 5.4 3"><path d="M0 0 H5.4 L2.7 3 Z" fill="#333"/></svg>
<span class="t" style="left:824.62px;top:390px;font-size:16px;line-height:21px;color:#000;transform:scaleX(0.9616);">49</span>
<span class="t" style="left:1130.67px;top:245px;font-size:17.2px;line-height:22px;color:#000;transform:scaleX(0.9665);">Référence Affaire</span>
<div style="left:1134px;top:269px;width:252px;height:26px;background:#fff;border:1px solid #9a9a9a;"></div>
<div style="left:1369px;top:271px;width:15px;height:22px;background:#dcdcdc;"></div>
<svg style="left:1373.8px;top:280.9px" width="5.4" height="3" viewBox="0 0 5.4 3"><path d="M0 0 H5.4 L2.7 3 Z" fill="#333"/></svg>
<span class="t" style="left:1397.59px;top:245px;font-size:17.2px;line-height:22px;color:#000;transform:scaleX(0.9435);">Toutes les Références</span>
<div style="left:1400px;top:269px;width:473px;height:26px;background:#fff;border:1px solid #8f8f8f;"></div>
<div style="left:1823px;top:270px;width:1px;height:24px;background:#a6a6a6;"></div>
<svg style="left:1831.3px;top:277px" width="16" height="10" viewBox="0 0 16 10"><path d="M0.6 5 Q8 -3.4 15.4 5 Q8 13.4 0.6 5 Z" fill="#fff" stroke="#000" stroke-width="1.3"/><circle cx="8" cy="4.8" r="3.6" fill="#000"/><circle cx="6.8" cy="3.6" r="1.1" fill="#fff"/></svg>
<div style="left:1856px;top:271px;width:15px;height:22px;background:#dcdcdc;"></div>
<svg style="left:1860.8px;top:280.9px" width="5.4" height="3" viewBox="0 0 5.4 3"><path d="M0 0 H5.4 L2.7 3 Z" fill="#333"/></svg>
<span class="t" style="left:1272.73px;top:308px;font-size:17.2px;line-height:22px;color:#000;transform:scaleX(0.9219);">Lieu de Livraison</span>
<div style="left:1400px;top:305px;width:473px;height:26px;background:#fff;border:1px solid #9a9a9a;"></div>
<div style="left:1856px;top:307px;width:15px;height:22px;background:#dcdcdc;"></div>
<svg style="left:1860.8px;top:316.9px" width="5.4" height="3" viewBox="0 0 5.4 3"><path d="M0 0 H5.4 L2.7 3 Z" fill="#333"/></svg>
<span class="t" style="left:1406.6px;top:308px;font-size:16px;line-height:21px;color:#000;transform:scaleX(0.9727);">ST-BARTH</span>
<div style="left:1134px;top:344px;width:751px;height:73px;background:#fff;border:1px solid #8f8f8f;"></div>
<svg style="left:23px;top:440px" width="13" height="13" viewBox="0 0 13 13"><circle cx="6.5" cy="6.5" r="6" fill="#fff" stroke="#333" stroke-width="1"/><circle cx="6.5" cy="6.5" r="3.2" fill="#333"/></svg>
<span class="t" style="left:42.32px;top:436px;font-size:17.2px;line-height:22px;color:#000;transform:scaleX(0.9338);">Lignes Cde</span>
<svg style="left:294.8px;top:440px" width="13" height="13" viewBox="0 0 13 13"><circle cx="6.5" cy="6.5" r="6" fill="#fff" stroke="#333" stroke-width="1"/></svg>
<span class="t" style="left:314.28px;top:436px;font-size:17.2px;line-height:22px;color:#000;transform:scaleX(0.9373);">Sugg° Achats (1)</span>
<svg style="left:619.2px;top:440px" width="13" height="13" viewBox="0 0 13 13"><circle cx="6.5" cy="6.5" r="6" fill="#fff" stroke="#333" stroke-width="1"/></svg>
<span class="t" style="left:638.57px;top:436px;font-size:17.2px;line-height:22px;color:#000;transform:scaleX(0.9405);">Sugg° Achats (2)</span>
<svg style="left:942px;top:440px" width="13" height="13" viewBox="0 0 13 13"><circle cx="6.5" cy="6.5" r="6" fill="#fff" stroke="#333" stroke-width="1"/></svg>
<span class="t" style="left:961.02px;top:436px;font-size:17.2px;line-height:22px;color:#000;transform:scaleX(0.9329);">Recherche Fournisseur (1)</span>
<svg style="left:1351px;top:440px" width="13" height="13" viewBox="0 0 13 13"><circle cx="6.5" cy="6.5" r="6" fill="#fff" stroke="#333" stroke-width="1"/></svg>
<span class="t" style="left:1369.92px;top:436px;font-size:17.2px;line-height:22px;color:#000;transform:scaleX(0.9334);">Recherche Fournisseur (2)</span>
<div style="left:6px;top:467px;width:1905px;height:21px;background:#eef6fd;"></div>
<span class="t" style="left:885.61px;top:469px;font-size:14.5px;line-height:19px;color:#000;font-weight:bold;transform:scaleX(0.9484);">Lignes de commandes</span>
<div style="left:6px;top:488px;width:1905px;height:344px;background:#fff;"></div>
<div style="left:6px;top:488px;width:1px;height:344px;background:#e3e3e3;"></div>
<div style="left:7px;top:488px;width:1904px;height:20px;background:linear-gradient(#fafafa,#f4f4f4 40%,#e6e6e6 85%,#dcdcdc);"></div>
<div style="left:7px;top:508px;width:18px;height:20px;background:#f1f1f1;"></div>
<div style="left:25px;top:489px;width:1px;height:39px;background:#d9d9d9;"></div>
<div style="left:125px;top:489px;width:1px;height:39px;background:#d9d9d9;"></div>
<div style="left:206px;top:489px;width:1px;height:39px;background:#d9d9d9;"></div>
<div style="left:307px;top:489px;width:1px;height:39px;background:#d9d9d9;"></div>
<div style="left:407px;top:489px;width:1px;height:39px;background:#d9d9d9;"></div>
<div style="left:540px;top:489px;width:1px;height:39px;background:#d9d9d9;"></div>
<div style="left:672px;top:489px;width:1px;height:39px;background:#d9d9d9;"></div>
<div style="left:771px;top:489px;width:1px;height:39px;background:#d9d9d9;"></div>
<div style="left:881px;top:489px;width:1px;height:39px;background:#d9d9d9;"></div>
<div style="left:1059px;top:489px;width:1px;height:39px;background:#d9d9d9;"></div>
<div style="left:1229px;top:489px;width:1px;height:39px;background:#d9d9d9;"></div>
<div style="left:1393px;top:489px;width:1px;height:39px;background:#d9d9d9;"></div>
<div style="left:1500px;top:489px;width:1px;height:39px;background:#d9d9d9;"></div>
<div style="left:1626px;top:489px;width:1px;height:39px;background:#d9d9d9;"></div>
<div style="left:1726px;top:489px;width:1px;height:39px;background:#d9d9d9;"></div>
<div style="left:1847px;top:489px;width:1px;height:39px;background:#d9d9d9;"></div>
<div style="left:7px;top:528px;width:1904px;height:1px;background:#dedede;"></div>
<svg style="left:9px;top:491px" width="15" height="13" viewBox="0 0 15 13"><rect x="0" y="0" width="15" height="13" fill="#5c5c5c"/><rect x="1.2" y="1.4" width="3.6" height="2.6" fill="#fff"/><rect x="6" y="1.4" width="3.6" height="2.6" fill="#fff"/><rect x="1.2" y="5.2" width="3.6" height="2.6" fill="#fff"/><rect x="6" y="5.2" width="3.6" height="2.6" fill="#fff"/><rect x="1.2" y="9" width="3.6" height="2.6" fill="#fff"/><rect x="6" y="9" width="3.6" height="2.6" fill="#fff"/><rect x="10.6" y="0" width="4.4" height="13" fill="#707070"/></svg>
<span class="t" style="left:42.3px;top:491px;font-size:11.8px;line-height:15px;color:#4c4c58;transform:scaleX(0.9538);">No_Cde</span>
<span class="t" style="left:101.71px;top:490px;font-size:11.6px;line-height:15px;color:#787878;transform:scaleX(0.9200);">Σ</span>
<svg style="left:114.2px;top:493px" width="7.6" height="7" viewBox="0 0 7.6 7"><path d="M0.4 0.5 H7.2 L4.4 3.4 V6.6 H3.2 V3.4 Z" fill="none" stroke="#707070" stroke-width="1"/></svg>
<span class="t" style="left:139.08px;top:491px;font-size:11.8px;line-height:15px;color:#4c4c58;transform:scaleX(0.9752);">Ligne</span>
<span class="t" style="left:182.31px;top:490px;font-size:11.6px;line-height:15px;color:#787878;transform:scaleX(0.9200);">Σ</span>
<svg style="left:194.9px;top:493px" width="7.6" height="7" viewBox="0 0 7.6 7"><path d="M0.4 0.5 H7.2 L4.4 3.4 V6.6 H3.2 V3.4 Z" fill="none" stroke="#707070" stroke-width="1"/></svg>
<span class="t" style="left:214.09px;top:491px;font-size:11.8px;line-height:15px;color:#4c4c58;transform:scaleX(0.9590);">No_Facture</span>
<span class="t" style="left:283.31px;top:490px;font-size:11.6px;line-height:15px;color:#787878;transform:scaleX(0.9200);">Σ</span>
<svg style="left:295.5px;top:493px" width="7.6" height="7" viewBox="0 0 7.6 7"><path d="M0.4 0.5 H7.2 L4.4 3.4 V6.6 H3.2 V3.4 Z" fill="none" stroke="#707070" stroke-width="1"/></svg>
<span class="t" style="left:328.94px;top:491px;font-size:11.8px;line-height:15px;color:#4c4c58;transform:scaleX(0.9860);">Article</span>
<span class="t" style="left:383.31px;top:490px;font-size:11.6px;line-height:15px;color:#787878;transform:scaleX(0.9200);">Σ</span>
<svg style="left:395.5px;top:493px" width="7.6" height="7" viewBox="0 0 7.6 7"><path d="M0.4 0.5 H7.2 L4.4 3.4 V6.6 H3.2 V3.4 Z" fill="none" stroke="#707070" stroke-width="1"/></svg>
<span class="t" style="left:415.09px;top:491px;font-size:11.8px;line-height:15px;color:#4c4c58;transform:scaleX(0.9649);">Description_Ligne</span>
<span class="t" style="left:515.91px;top:490px;font-size:11.6px;line-height:15px;color:#787878;transform:scaleX(0.9200);">Σ</span>
<svg style="left:528.5px;top:493px" width="7.6" height="7" viewBox="0 0 7.6 7"><path d="M0.4 0.5 H7.2 L4.4 3.4 V6.6 H3.2 V3.4 Z" fill="none" stroke="#707070" stroke-width="1"/></svg>
<span class="t" style="left:548.8px;top:491px;font-size:11.8px;line-height:15px;color:#4c4c58;transform:scaleX(0.9389);">Qté_Commandée</span>
<span class="t" style="left:648.31px;top:490px;font-size:11.6px;line-height:15px;color:#787878;transform:scaleX(0.9200);">Σ</span>
<svg style="left:661.2px;top:493px" width="7.6" height="7" viewBox="0 0 7.6 7"><path d="M0.4 0.5 H7.2 L4.4 3.4 V6.6 H3.2 V3.4 Z" fill="none" stroke="#707070" stroke-width="1"/></svg>
<span class="t" style="left:680.5px;top:491px;font-size:11.8px;line-height:15px;color:#4c4c58;transform:scaleX(0.9498);">Qté_Reçue</span>
<span class="t" style="left:747.31px;top:490px;font-size:11.6px;line-height:15px;color:#787878;transform:scaleX(0.9200);">Σ</span>
<svg style="left:759.5px;top:493px" width="7.6" height="7" viewBox="0 0 7.6 7"><path d="M0.4 0.5 H7.2 L4.4 3.4 V6.6 H3.2 V3.4 Z" fill="none" stroke="#707070" stroke-width="1"/></svg>
<span class="t" style="left:780.5px;top:491px;font-size:11.8px;line-height:15px;color:#4c4c58;transform:scaleX(0.9358);">Qté_Rebutée</span>
<span class="t" style="left:857.61px;top:490px;font-size:11.6px;line-height:15px;color:#787878;transform:scaleX(0.9200);">Σ</span>
<svg style="left:869.5px;top:493px" width="7.6" height="7" viewBox="0 0 7.6 7"><path d="M0.4 0.5 H7.2 L4.4 3.4 V6.6 H3.2 V3.4 Z" fill="none" stroke="#707070" stroke-width="1"/></svg>
<span class="t" style="left:890.81px;top:491px;font-size:11.8px;line-height:15px;color:#4c4c58;transform:scaleX(0.9412);">Date_Livraison_demandée</span>
<span class="t" style="left:1035.61px;top:490px;font-size:11.6px;line-height:15px;color:#787878;transform:scaleX(0.9200);">Σ</span>
<svg style="left:1047.9px;top:493px" width="7.6" height="7" viewBox="0 0 7.6 7"><path d="M0.4 0.5 H7.2 L4.4 3.4 V6.6 H3.2 V3.4 Z" fill="none" stroke="#707070" stroke-width="1"/></svg>
<span class="t" style="left:1068.1px;top:491px;font-size:11.8px;line-height:15px;color:#4c4c58;transform:scaleX(0.9517);">Date_Livraison_acceptée</span>
<span class="t" style="left:1204.91px;top:490px;font-size:11.6px;line-height:15px;color:#787878;transform:scaleX(0.9200);">Σ</span>
<svg style="left:1217.2px;top:493px" width="7.6" height="7" viewBox="0 0 7.6 7"><path d="M0.4 0.5 H7.2 L4.4 3.4 V6.6 H3.2 V3.4 Z" fill="none" stroke="#707070" stroke-width="1"/></svg>
<span class="t" style="left:1237.29px;top:491px;font-size:11.8px;line-height:15px;color:#4c4c58;transform:scaleX(0.9647);">Date_Livraison_réalisée</span>
<span class="t" style="left:1369.31px;top:490px;font-size:11.6px;line-height:15px;color:#787878;transform:scaleX(0.9200);">Σ</span>
<svg style="left:1382px;top:493px" width="7.6" height="7" viewBox="0 0 7.6 7"><path d="M0.4 0.5 H7.2 L4.4 3.4 V6.6 H3.2 V3.4 Z" fill="none" stroke="#707070" stroke-width="1"/></svg>
<span class="t" style="left:1401.38px;top:491px;font-size:11.8px;line-height:15px;color:#4c4c58;transform:scaleX(0.9763);">Prix_Unitaire</span>
<span class="t" style="left:1476.51px;top:490px;font-size:11.6px;line-height:15px;color:#787878;transform:scaleX(0.9200);">Σ</span>
<svg style="left:1489.2px;top:493px" width="7.6" height="7" viewBox="0 0 7.6 7"><path d="M0.4 0.5 H7.2 L4.4 3.4 V6.6 H3.2 V3.4 Z" fill="none" stroke="#707070" stroke-width="1"/></svg>
<span class="t" style="left:1508.2px;top:491px;font-size:11.8px;line-height:15px;color:#4c4c58;transform:scaleX(0.9574);">Réf_Fournisseur</span>
<span class="t" style="left:1602.41px;top:490px;font-size:11.6px;line-height:15px;color:#787878;transform:scaleX(0.9200);">Σ</span>
<svg style="left:1615.1px;top:493px" width="7.6" height="7" viewBox="0 0 7.6 7"><path d="M0.4 0.5 H7.2 L4.4 3.4 V6.6 H3.2 V3.4 Z" fill="none" stroke="#707070" stroke-width="1"/></svg>
<span class="t" style="left:1648.44px;top:491px;font-size:11.8px;line-height:15px;color:#4c4c58;transform:scaleX(0.9467);">Affaire</span>
<span class="t" style="left:1702.41px;top:490px;font-size:11.6px;line-height:15px;color:#787878;transform:scaleX(0.9200);">Σ</span>
<svg style="left:1715.1px;top:493px" width="7.6" height="7" viewBox="0 0 7.6 7"><path d="M0.4 0.5 H7.2 L4.4 3.4 V6.6 H3.2 V3.4 Z" fill="none" stroke="#707070" stroke-width="1"/></svg>
<span class="t" style="left:1735.6px;top:491px;font-size:11.8px;line-height:15px;color:#4c4c58;transform:scaleX(0.9501);">Ligne_Facturée</span>
<span class="t" style="left:1823.41px;top:490px;font-size:11.6px;line-height:15px;color:#787878;transform:scaleX(0.9200);">Σ</span>
<svg style="left:1836.2px;top:493px" width="7.6" height="7" viewBox="0 0 7.6 7"><path d="M0.4 0.5 H7.2 L4.4 3.4 V6.6 H3.2 V3.4 Z" fill="none" stroke="#707070" stroke-width="1"/></svg>
<span class="t" style="left:1870.21px;top:491px;font-size:11.8px;line-height:15px;color:#4c4c58;transform:scaleX(0.9246);">Soldé</span>
<svg style="left:13.7px;top:513.6px" width="5.4" height="9.4" viewBox="0 0 5.4 9.4"><path d="M0 0 L5.4 4.7 L0 9.4 Z" fill="#333"/></svg>
<span class="t" style="left:31.23px;top:510px;font-size:11.8px;line-height:15px;color:#464646;transform:scaleX(0.9607);">CA11365</span>
<span class="t" style="left:190.71px;top:510px;font-size:11.8px;line-height:15px;color:#464646;transform:scaleX(0.9500);">10</span>
<span class="t" style="left:212.82px;top:510px;font-size:11.8px;line-height:15px;color:#464646;transform:scaleX(0.9511);">456</span>
<span class="t" style="left:313.75px;top:510px;font-size:11.8px;line-height:15px;color:#464646;transform:scaleX(0.9304);">CM180710-6</span>
<span class="t" style="left:413.42px;top:509px;font-size:11.8px;line-height:15px;color:#464646;transform:scaleX(0.9296);">Plaque Rainées en SC3</span>
<span class="t" style="left:650.08px;top:510px;font-size:11.8px;line-height:15px;color:#464646;transform:scaleX(0.9500);">100</span>
<span class="t" style="left:748.48px;top:510px;font-size:11.8px;line-height:15px;color:#464646;transform:scaleX(0.9500);">100</span>
<span class="t" style="left:870.93px;top:510px;font-size:11.8px;line-height:15px;color:#464646;transform:scaleX(0.9500);">0</span>
<span class="t" style="left:945.09px;top:509px;font-size:11.8px;line-height:15px;color:#464646;transform:scaleX(0.9179);">16/04/2019</span>
<span class="t" style="left:1118.69px;top:509px;font-size:11.8px;line-height:15px;color:#464646;transform:scaleX(0.9196);">13/04/2019</span>
<span class="t" style="left:1285.97px;top:509px;font-size:11.8px;line-height:15px;color:#464646;transform:scaleX(0.9165);">30/03/2019</span>
<span class="t" style="left:1468.48px;top:510px;font-size:11.8px;line-height:15px;color:#464646;transform:scaleX(0.9500);">1.823</span>
<span class="t" style="left:1633px;top:509px;font-size:11.8px;line-height:15px;color:#464646;transform:scaleX(0.9341);">SIGNALETIQUE</span>
<span class="t" style="left:1853.98px;top:510px;font-size:11.8px;line-height:15px;color:#464646;transform:scaleX(0.9764);">O</span>
<div style="left:6px;top:832px;width:1905px;height:17px;background:#d6d6d6;"></div>
<div style="left:7px;top:832px;width:5px;height:17px;background:#f0f0f0;"></div>
<div style="left:12px;top:832px;width:17px;height:17px;background:#fff;border:1px solid #b0b0b0;"></div>
<svg style="left:18px;top:837.4px" width="4" height="6.2" viewBox="0 0 4 6.2"><path d="M4 0 L0 3.1 L4 6.2 Z" fill="#444"/></svg>
<div style="left:29px;top:832px;width:590px;height:17px;background:#fff;border:1px solid #b0b0b0;"></div>
<div style="left:1894px;top:832px;width:17px;height:17px;background:#fff;border:1px solid #b0b0b0;"></div>
<svg style="left:1900.6px;top:837.4px" width="4" height="6.2" viewBox="0 0 4 6.2"><path d="M0 0 L4 3.1 L0 6.2 Z" fill="#444"/></svg>
<div style="left:7px;top:858px;width:1904px;height:23px;background:#eeeeee;"></div>
<div style="left:7px;top:858px;width:1904px;height:1px;background-image:repeating-linear-gradient(90deg,#cfcfcf 0 1px,transparent 1px 2px);"></div>
<div style="left:7px;top:880px;width:1904px;height:1px;background-image:repeating-linear-gradient(90deg,#cfcfcf 0 1px,transparent 1px 2px);"></div>
<div style="left:1910px;top:858px;width:1px;height:23px;background-image:repeating-linear-gradient(180deg,#cfcfcf 0 1px,transparent 1px 2px);"></div>
<div style="left:7px;top:858px;width:1px;height:23px;background-image:repeating-linear-gradient(180deg,#cfcfcf 0 1px,transparent 1px 2px);"></div>
<span class="t" style="left:884.34px;top:859px;font-size:16px;line-height:21px;color:#696969;font-weight:bold;transform:scaleX(0.9259);">Pied de Commande</span>
<div style="left:7px;top:881px;width:1904px;height:232px;background:#f5f5f5;border:1px solid #d6d6d6;border-top:none;"></div>
<span class="t" style="left:24.32px;top:904px;font-size:17.2px;line-height:22px;color:#000;transform:scaleX(0.9284);">Mode d'expédition</span>
<div style="left:21px;top:929px;width:426px;height:26px;background:#fff;border:1px solid #9a9a9a;"></div>
<div style="left:430px;top:931px;width:15px;height:22px;background:#dcdcdc;"></div>
<svg style="left:434.8px;top:940.9px" width="5.4" height="3" viewBox="0 0 5.4 3"><path d="M0 0 H5.4 L2.7 3 Z" fill="#333"/></svg>
<span class="t" style="left:27.31px;top:932px;font-size:16px;line-height:21px;color:#000;transform:scaleX(0.9295);">Messagerie Standard</span>
<span class="t" style="left:24.32px;top:969px;font-size:17.2px;line-height:22px;color:#000;transform:scaleX(0.9334);">Mode de Règlement</span>
<div style="left:21px;top:994px;width:426px;height:26px;background:#fff;border:1px solid #9a9a9a;"></div>
<div style="left:430px;top:996px;width:15px;height:22px;background:#dcdcdc;"></div>
<svg style="left:434.8px;top:1005.9px" width="5.4" height="3" viewBox="0 0 5.4 3"><path d="M0 0 H5.4 L2.7 3 Z" fill="#333"/></svg>
<span class="t" style="left:27.3px;top:997px;font-size:16px;line-height:21px;color:#000;transform:scaleX(0.9386);">Par virement</span>
<span class="t" style="left:24.2px;top:1034px;font-size:17.2px;line-height:22px;color:#000;transform:scaleX(0.9264);">Condit° de Règlement</span>
<div style="left:21px;top:1060px;width:426px;height:26px;background:#fff;border:1px solid #9a9a9a;"></div>
<div style="left:430px;top:1062px;width:15px;height:22px;background:#dcdcdc;"></div>
<svg style="left:434.8px;top:1071.9px" width="5.4" height="3" viewBox="0 0 5.4 3"><path d="M0 0 H5.4 L2.7 3 Z" fill="#333"/></svg>
<span class="t" style="left:28.43px;top:1063px;font-size:16px;line-height:21px;color:#000;transform:scaleX(0.9291);">Virement bancaire 30 Jours à date de facture</span>
<div style="left:458px;top:884px;width:1441px;height:23px;background:#f0f0f0;"></div>
<div style="left:458px;top:907px;width:1441px;height:194px;background:#e6e6e6;border:1px solid #a3a3a3;"></div>
<div style="left:460px;top:884px;width:167px;height:24px;background:#e6e6e6;border:1px solid #a3a3a3;border-bottom:none;"></div>
<svg style="left:463px;top:890px" width="14" height="12" viewBox="0 0 14 12"><rect x="0.5" y="0.5" width="13" height="11" fill="#d6d6d6" stroke="#8a8a8a" stroke-width="1"/><path d="M2 2.4 H12 M2 4.2 H10" stroke="#9a9a9a" stroke-width="1"/><rect x="2" y="6.4" width="10.4" height="3.4" fill="#3a3a3a"/></svg>
<span class="t" style="left:479.88px;top:886px;font-size:16px;line-height:21px;color:#000;font-weight:bold;transform:scaleX(0.9830);">Pied de commande</span>
<svg style="left:630px;top:889.8px" width="12.6" height="12.6" viewBox="0 0 13 13"><rect x="0" y="0" width="13" height="13" rx="2.6" fill="#3a3a3a"/><text x="1" y="9.4" font-family="Liberation Sans,sans-serif" font-size="7" font-weight="bold" fill="#fff" textLength="11" lengthAdjust="spacingAndGlyphs">Tax</text></svg>
<span class="t" style="left:652.09px;top:886px;font-size:16px;line-height:21px;color:#6d6d6d;transform:scaleX(0.9466);">Détails des Taxes</span>
<span class="t" style="left:530.31px;top:932px;font-size:17.2px;line-height:22px;color:#000;transform:scaleX(0.9366);">Date Prochaine échéance</span>
<div style="left:725px;top:930px;width:184px;height:25px;background:#fff;border:1px solid #9a9a9a;"></div>
<div style="left:891px;top:931px;width:17px;height:23px;background:#dadada;"></div>
<svg style="left:895.9px;top:940.9px" width="7.2" height="4.2" viewBox="0 0 7.2 4.2"><path d="M0 0 H7.2 L3.6 4.2 Z" fill="#333"/></svg>
<span class="t" style="left:729.92px;top:933px;font-size:16px;line-height:21px;color:#000;transform:scaleX(0.9032);">30/04/2019</span>
<span class="t" style="left:683.59px;top:970px;font-size:17.2px;line-height:22px;color:#000;transform:scaleX(1.0258);">État</span>
<div style="left:725px;top:968px;width:716px;height:26px;background:#fff;border:1px solid #9a9a9a;"></div>
<div style="left:1424px;top:970px;width:15px;height:22px;background:#dcdcdc;"></div>
<svg style="left:1428.8px;top:979.9px" width="5.4" height="3" viewBox="0 0 5.4 3"><path d="M0 0 H5.4 L2.7 3 Z" fill="#333"/></svg>
<span class="t" style="left:592.04px;top:1012px;font-size:17.2px;line-height:22px;color:#000;transform:scaleX(0.9127);">Forcer la livraison</span>
<div style="left:725px;top:1010px;width:247px;height:25px;background:#fff;border:1px solid #9a9a9a;"></div>
<div style="left:954px;top:1011px;width:17px;height:23px;background:#dadada;"></div>
<svg style="left:958.9px;top:1020.9px" width="7.2" height="4.2" viewBox="0 0 7.2 4.2"><path d="M0 0 H7.2 L3.6 4.2 Z" fill="#333"/></svg>
<span class="t" style="left:729.61px;top:1013px;font-size:16px;line-height:21px;color:#000;transform:scaleX(0.9084);">13/04/2019</span>
<svg style="left:928.9px;top:1014.2px" width="17" height="16" viewBox="0 0 17 16"><rect x="1.5" y="1.9" width="11.8" height="11.6" rx="2.6" fill="#fff" stroke="#111" stroke-width="1.6"/><path d="M3.4 6.6 L7.2 10.4 L15.8 2.4" stroke="#fff" stroke-width="4.6" fill="none"/><path d="M3.4 6.6 L7.2 10.4 L15.8 2.4" stroke="#111" stroke-width="2.6" fill="none"/></svg>
<div style="left:725px;top:1058px;width:13px;height:13px;background:#fff;border:1px solid #333;"></div>
<span class="t" style="left:743.73px;top:1053px;font-size:17.2px;line-height:22px;color:#000;transform:scaleX(0.9241);">MàJ des Qtés commandées aux Qtés reçues</span>
<span class="t" style="left:1521px;top:931px;font-size:17.2px;line-height:22px;color:#000;transform:scaleX(0.9431);">Montant port HT</span>
<div style="left:1646px;top:930px;width:33px;height:25px;background:#f0f0f0;border:1px solid #a8a8a8;"></div>
<span class="t" style="left:1658.72px;top:933px;font-size:16px;line-height:21px;color:#6a6a6a;transform:scaleX(0.9500);">€</span>
<div style="left:1678px;top:930px;width:175px;height:25px;background:#fff;border:1px solid #a8a8a8;"></div>
<span class="t" style="left:1841.93px;top:933px;font-size:16px;line-height:21px;color:#000;transform:scaleX(0.9300);">0</span>
<span class="t" style="left:1577.9px;top:972px;font-size:17.2px;line-height:22px;color:#000;transform:scaleX(0.9419);">Total HT</span>
<div style="left:1646px;top:971px;width:33px;height:25px;background:#f0f0f0;border:1px solid #a8a8a8;"></div>
<span class="t" style="left:1658.72px;top:974px;font-size:16px;line-height:21px;color:#6a6a6a;transform:scaleX(0.9500);">€</span>
<div style="left:1678px;top:971px;width:175px;height:25px;background:#f0f0f0;border:1px solid #a8a8a8;"></div>
<span class="t" style="left:1804.66px;top:974px;font-size:16px;line-height:21px;color:#6d6d6d;transform:scaleX(0.9300);">182.30</span>
<span class="t" style="left:1570.31px;top:1011px;font-size:17.2px;line-height:22px;color:#000;transform:scaleX(0.9185);">Total TTC</span>
<div style="left:1646px;top:1010px;width:33px;height:25px;background:#f0f0f0;border:1px solid #a8a8a8;"></div>
<span class="t" style="left:1658.72px;top:1013px;font-size:16px;line-height:21px;color:#6a6a6a;transform:scaleX(0.9500);">€</span>
<div style="left:1678px;top:1010px;width:175px;height:25px;background:#f0f0f0;border:1px solid #a8a8a8;"></div>
<span class="t" style="left:1804.74px;top:1013px;font-size:16px;line-height:21px;color:#6d6d6d;transform:scaleX(0.9300);">218.76</span>
<div style="left:8px;top:1123px;width:190px;height:41px;background:#f5f5f5;border:1px solid #c3c3c3;box-shadow:inset 0 0 0 1px #dfdfdf;"></div>
<span class="t" style="left:74.52px;top:1134px;font-size:16px;line-height:21px;color:#444;transform:scaleX(0.9255);">Enregistrer</span>
<svg style="left:18px;top:1135.5px" width="15" height="15" viewBox="0 0 15 15"><path d="M0.9 0.9 H10.6 L14.1 4.4 V14.1 H0.9 Z" fill="#b9b9b9" stroke="#1c78cc" stroke-width="1.8"/><rect x="3.4" y="0.9" width="6.2" height="4.6" fill="#1c78cc"/><rect x="6.6" y="1.6" width="1.9" height="3" fill="#fff"/><rect x="3.4" y="9.4" width="8.2" height="4.7" fill="#1c78cc"/><rect x="4.4" y="10.6" width="6.2" height="2.6" fill="#fff"/></svg>
<div style="left:210px;top:1123px;width:190px;height:41px;background:#f5f5f5;border:1px solid #c3c3c3;box-shadow:inset 0 0 0 1px #dfdfdf;"></div>
<span class="t" style="left:282.78px;top:1134px;font-size:16px;line-height:21px;color:#444;transform:scaleX(0.9517);">Nouveau</span>
<svg style="left:218.9px;top:1135px" width="16.2" height="16" viewBox="0 0 16.2 16"><rect x="5.8" y="0" width="4.6" height="16" rx="0.9" fill="#20ad48"/><rect x="0" y="5.7" width="16.2" height="4.6" rx="0.9" fill="#20ad48"/></svg>
<div style="left:412px;top:1123px;width:190px;height:41px;background:#f5f5f5;border:1px solid #c3c3c3;box-shadow:inset 0 0 0 1px #dfdfdf;"></div>
<span class="t" style="left:476.5px;top:1134px;font-size:16px;line-height:21px;color:#444;transform:scaleX(0.9371);">Lignes Cde</span>
<svg style="left:421.9px;top:1135px" width="14.4" height="16" viewBox="0 0 14.4 16"><rect x="0.7" y="2.1" width="13" height="13.2" rx="1.6" fill="#fff" stroke="#0c2160" stroke-width="1.4"/><path d="M2.6 0.2 V3 M11.8 0.2 V3" stroke="#0c2160" stroke-width="1.5"/><rect x="2.5" y="4.6" width="9.4" height="2.3" fill="#0c2160"/><rect x="2.5" y="7.8" width="9.4" height="2.3" fill="#0c2160"/><rect x="2.5" y="11" width="9.4" height="2.3" fill="#0c2160"/></svg>
<div style="left:613px;top:1123px;width:190px;height:41px;background:#f5f5f5;border:1px solid #c3c3c3;box-shadow:inset 0 0 0 1px #dfdfdf;"></div>
<span class="t" style="left:690.93px;top:1134px;font-size:16px;line-height:21px;color:#444;transform:scaleX(0.9069);">Annuler</span>
<svg style="left:621.2px;top:1133.7px" width="17" height="17" viewBox="0 0 17 17"><path d="M4.4 5.2 A6.4 6.4 0 1 1 3 11.6" fill="none" stroke="#f50d15" stroke-width="2.4"/><path d="M0.3 1.4 L1.1 8.2 L7.6 6.4 Z" fill="#f50d15"/></svg>
<div style="left:815px;top:1123px;width:190px;height:41px;background:#f5f5f5;border:1px solid #c3c3c3;box-shadow:inset 0 0 0 1px #dfdfdf;"></div>
<span class="t" style="left:883.33px;top:1134px;font-size:16px;line-height:21px;color:#444;transform:scaleX(0.9299);">Supprimer</span>
<svg style="left:825.9px;top:1136px" width="13.2" height="15" viewBox="0 0 14 16"><path d="M0.4 2.4 H13.6 V4.2 H0.4 Z M4.6 0.4 H9.4 V2.4 H4.6 Z" fill="#222"/><path d="M1.6 4.8 H12.4 L11.6 15.6 H2.4 Z" fill="#222"/><path d="M4.6 6.6 V13.6 M7 6.6 V13.6 M9.4 6.6 V13.6" stroke="#f5f5f5" stroke-width="1"/></svg>
<div style="left:1017px;top:1123px;width:190px;height:41px;background:#f5f5f5;border:1px solid #c3c3c3;box-shadow:inset 0 0 0 1px #dfdfdf;"></div>
<span class="t" style="left:1089.63px;top:1134px;font-size:16px;line-height:21px;color:#444;transform:scaleX(0.9502);">Imprimer</span>
<svg style="left:1025.7px;top:1135.5px" width="17" height="16" viewBox="0 0 17 16"><path d="M3.6 0.6 H11.4 L13.4 2.6 V7 H3.6 Z" fill="#fff" stroke="#222" stroke-width="1.3"/><rect x="0.4" y="6" width="16.2" height="6.8" rx="1.4" fill="#222"/><rect x="3.6" y="10.4" width="9.8" height="5" fill="#fff" stroke="#222" stroke-width="1.3"/></svg>
<div style="left:1705px;top:1123px;width:190px;height:41px;background:#f5f5f5;border:1px solid #c3c3c3;box-shadow:inset 0 0 0 1px #dfdfdf;"></div>
<span class="t" style="left:1783.3px;top:1134px;font-size:16px;line-height:21px;color:#444;transform:scaleX(0.9399);">Fermer</span>
<svg style="left:1714.2px;top:1135px" width="16" height="16" viewBox="0 0 16 16"><path d="M2 2 L14 14 M14 2 L2 14" stroke="#ee0f16" stroke-width="3.6" stroke-linecap="round"/></svg>
</body></html>
